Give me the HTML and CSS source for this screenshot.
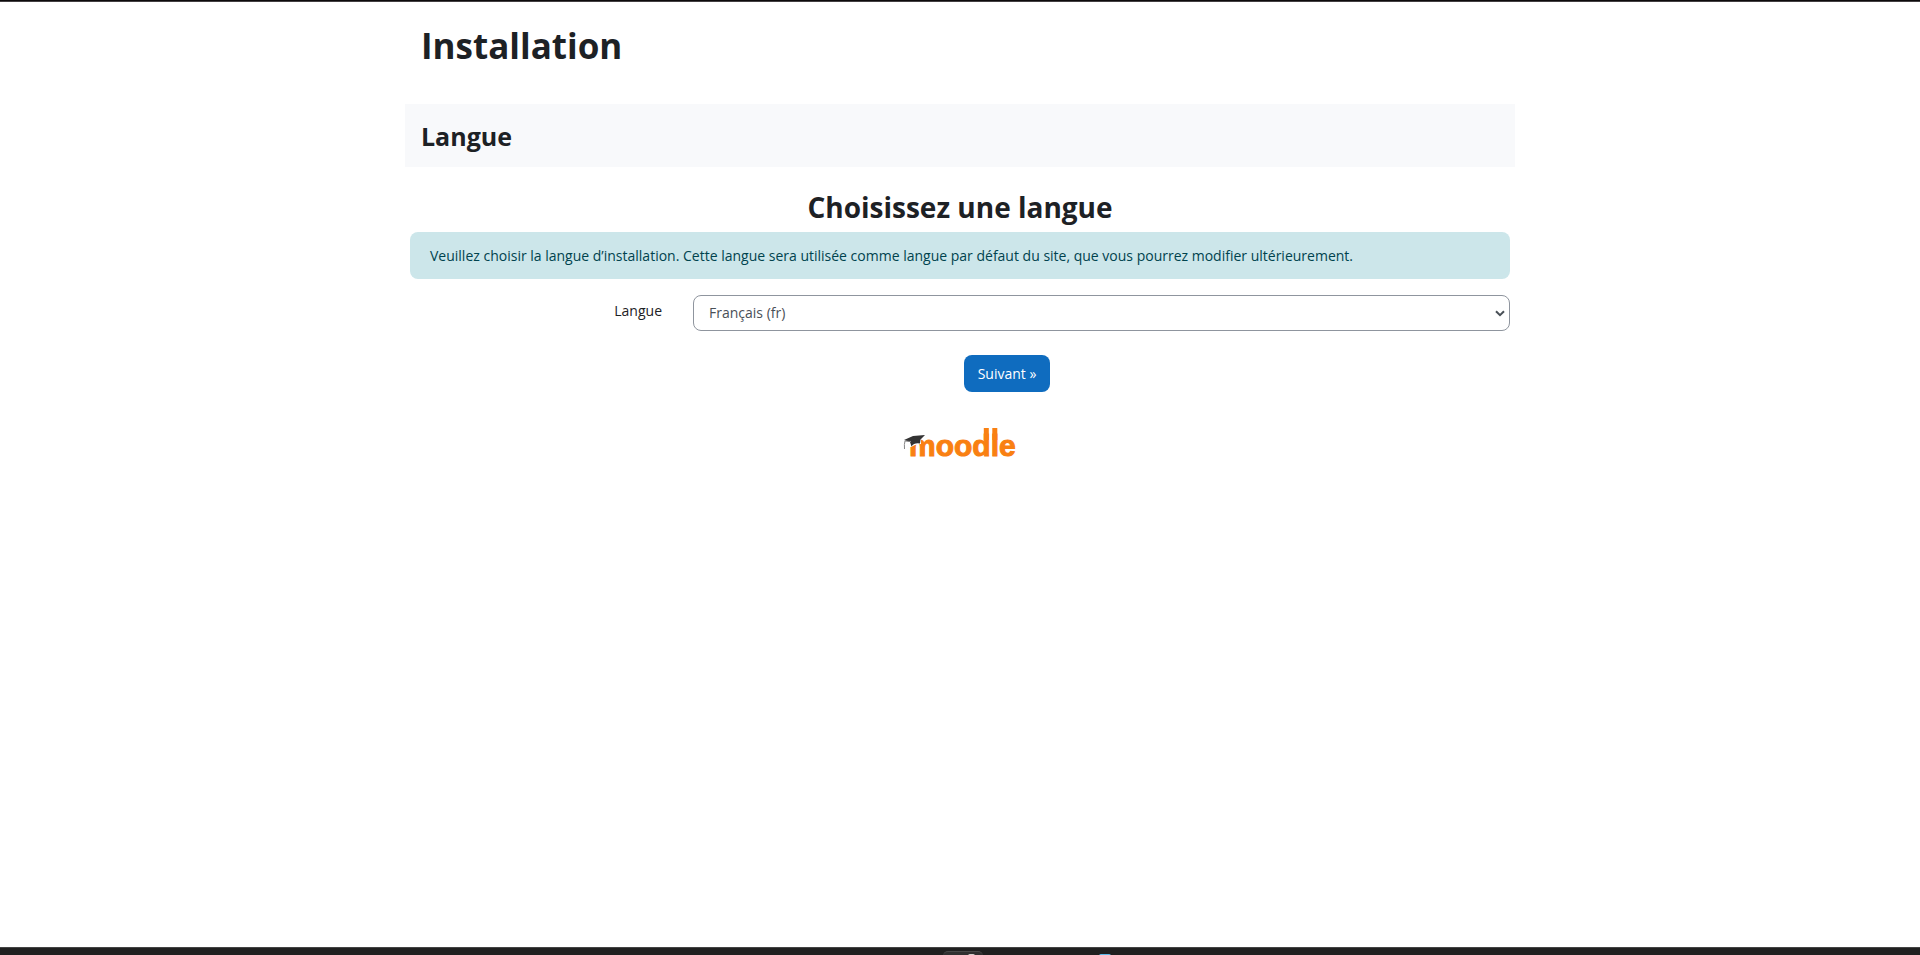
FILE: index.html
```html
<!DOCTYPE html>
<html lang="fr">
<head>
<meta charset="utf-8">
<meta name="viewport" content="width=device-width, initial-scale=1">
<title>Installation</title>
<link rel="stylesheet" href="styles.css">
</head>
<body>
<div class="top-edge"></div>
<main class="page">
  <h1 class="page-title">Installation</h1>
  <div class="stage"><h2 class="stage-title">Langue</h2></div>
  <form class="installform">
    <h2 class="form-title">Choisissez une langue</h2>
    <div class="alert">Veuillez choisir la langue d’installation. Cette langue sera utilisée comme langue par défaut du site, que vous pourrez modifier ultérieurement.</div>
    <div class="field">
      <label class="field-label" for="langlist">Langue</label>
      <div class="select-wrap">
        <select class="select" id="langlist" name="lang"><option selected>Français (fr)</option></select>
        <svg class="chevron" viewBox="0 0 10 7" aria-hidden="true"><path d="M1 1.2 5 5.2 9 1.2"/></svg>
      </div>
    </div>
    <div class="actions"><button class="next" type="submit">Suivant »</button></div>
  </form>
  <footer class="footer">
    <svg class="logo" viewBox="0 0 120 40" role="img" aria-label="moodle">
      <text class="logo-text" x="9" y="30">moodle</text>
      <path class="logo-bars" d="M83.8 2h5v12h-5zM92.300 2h5v12h-5z"/>
      <path class="logo-gap" d="M5 10h16v8l-6 1-4 2H5z"/>
      <path class="logo-cap" d="M4 14 13 10 25 9 20.500 13.500 20 17.500Q14 16.500 11.500 20.500L10 16Z"/>
      <path class="logo-cord" d="M11 15.500 5 15Q4 18 4.500 23"/>
    </svg>
  </footer>
</main>
<div class="taskbar">
  <span class="task"><span class="task-icon"></span></span>
  <span class="task-app"></span>
</div>
</body>
</html>
```
FILE: styles.css
```css
* { box-sizing: border-box; }
body {
  margin: 0;
  min-height: 100vh;
  display: flex;
  flex-direction: column;
  background: #fff;
  color: #1d2125;
  font: 14px/22px "Open Sans", "Noto Sans", sans-serif;
}
h1, h2 { margin: 0; font-weight: 700; }
.top-edge { height: 2px; background: #0d0a0c; border-bottom: 1px solid #444042; }
.page { flex: 1; width: 100%; max-width: 1110px; margin: 0 auto; }
.page-title { padding: 21px 16px 36px; font-size: 35px; line-height: 45px; }
.stage { padding: 17px 16px 15px; background: #f8f9fb; }
.stage-title { font-size: 25px; line-height: 31px; }
.installform { padding: 22px 5px 0; }
.form-title { font-size: 28px; line-height: 36px; text-align: center; margin-bottom: 7px; }
.alert { padding: 13px 20px 12px; border-radius: 8px; background: #cce6ea; color: #00434e; }
.field { display: grid; grid-template-columns: 252px 1fr; gap: 31px; margin-top: 16px; }
.field-label { padding-top: 5px; text-align: right; }
.select-wrap { position: relative; }
.select {
  display: block;
  width: 100%;
  height: 36px;
  padding: 0 32px 0 15px;
  appearance: none;
  border: 1px solid #8f959e;
  border-radius: 8px;
  background: #fff;
  color: #495057;
  font: inherit;
}
.chevron {
  position: absolute;
  right: 5px;
  top: 15px;
  width: 10px;
  height: 7px;
  fill: none;
  stroke: #495057;
  stroke-width: 2;
  pointer-events: none;
}
.actions { margin-top: 24px; padding-left: 94px; text-align: center; }
.next {
  height: 37px;
  padding: 0 14px;
  border: 0;
  border-radius: 8px;
  background: #0f6cbf;
  color: #fff;
  font: inherit;
}
.footer { display: flex; justify-content: center; margin-top: 34px; }
.logo { width: 120px; height: 40px; }
.logo-text { font: 700 30px "Liberation Sans", Arial, sans-serif; fill: #f98012; stroke: #f98012; stroke-width: 1; }
.logo-bars { fill: #f98012; }
.logo-gap { fill: #fff; }
.logo-cap { fill: #333; }
.logo-cord { fill: none; stroke: #888; stroke-width: 1; }
.taskbar {
  display: flex;
  justify-content: center;
  gap: 116px;
  height: 8px;
  padding-left: 134px;
  overflow: hidden;
  background: #202020;
  border-top: 1px solid #444;
}
.task { flex: none; width: 40px; height: 40px; margin-top: 3px; padding: 2px 8px 0 25px; border-radius: 5px; background: #303030; border-top: 1px solid #484848; }
.task-icon { display: block; height: 7px; background: #d5d0cd; border-radius: 2px; }
.task-app { flex: none; width: 12px; height: 12px; margin-top: 6px; border-radius: 2px; background: #5bb8e8; }
```
